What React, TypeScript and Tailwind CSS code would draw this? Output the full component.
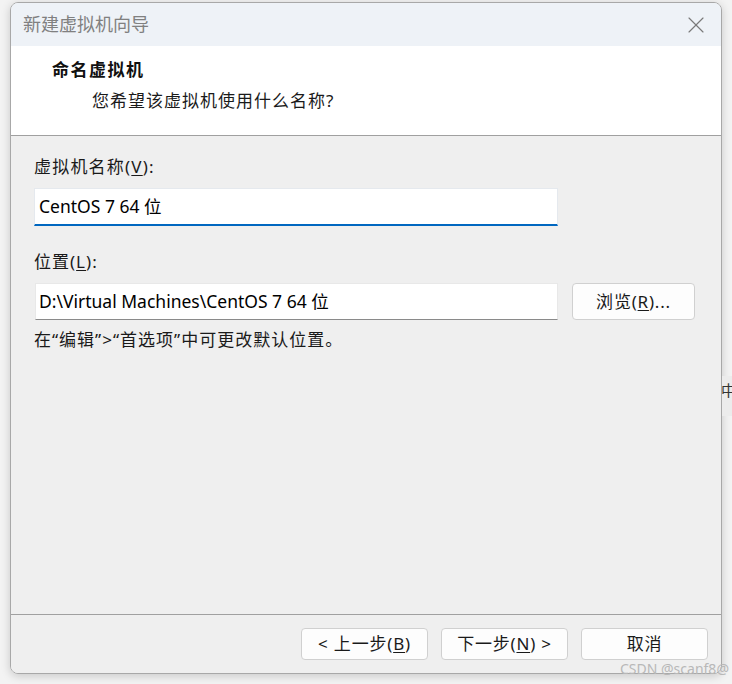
import { X } from "lucide-react"

const font = { fontFamily: '"Noto Sans", "Noto Sans CJK SC", sans-serif' }

function DialogButton({ children }: { children: React.ReactNode }) {
  return (
    <button className="h-[32px] w-[127px] rounded-[4px] border border-[#d0d0d0] bg-[#fdfdfd] text-[17px] tracking-[0.8px] text-[#1a1a1a]">
      {children}
    </button>
  )
}

export default function App() {
  return (
    <div
      className="relative h-[684px] w-[732px] overflow-hidden bg-[#f3f3f3]"
      style={font}
    >
      {/* neighbouring window fragment */}
      <div className="absolute left-[722px] top-[376px] h-[40px] w-[10px] bg-[#ececec]" />
      <span className="absolute left-[721px] top-[378px] text-[15px] leading-[24px] text-[#333]">
        中
      </span>

      <div className="ml-[10px] mt-[2px] flex h-[672px] w-[712px] flex-col overflow-hidden rounded-[8px] border-[1.5px] border-[#a8a8a8] shadow-[0_2px_10px_rgba(0,0,0,0.18)]">
        {/* Title bar */}
        <div className="flex h-[43px] shrink-0 items-center justify-between bg-[#eef2f7] pl-[12px] pr-[11px]">
          <span className="text-[18px] text-[#808080]">新建虚拟机向导</span>
          <X className="h-[28px] w-[28px] text-[#7a7a7a]" strokeWidth={1} />
        </div>

        {/* Header */}
        <div className="h-[90px] shrink-0 border-b border-[#a0a0a0] bg-white pl-[41px] pt-[12px]">
          <div className="text-[17px] font-bold leading-[24px] tracking-[1.5px] text-[#111]">命名虚拟机</div>
          <div className="ml-[40px] mt-[7px] text-[17px] leading-[24px] tracking-[1px] text-[#1a1a1a]">
            您希望该虚拟机使用什么名称?
          </div>
        </div>

        {/* Body */}
        <div className="flex-1 border-b border-[#a0a0a0] bg-[#efefef] pl-[23px] pt-[19px]">
          <div className="text-[17px] leading-[24px] tracking-[1.2px] text-[#1a1a1a]">
            虚拟机名称(<span className="underline underline-offset-2">V</span>):
          </div>
          <div className="mt-[9px] flex h-[38px] w-[524px] items-center border border-b-2 border-[#e5e9ee] border-b-[#0067c0] bg-white pl-[4px] text-[17.5px] text-black">
            CentOS 7 64 位
          </div>

          <div className="mt-[24px] text-[17px] leading-[24px] tracking-[1px] text-[#1a1a1a]">
            位置(<span className="underline underline-offset-2">L</span>):
          </div>
          <div className="mt-[9px] flex items-center gap-[14px]">
            <div className="ml-[1px] flex h-[37px] w-[523px] items-center border border-[#e8e8e8] border-b-[#8a8a8a] bg-white pl-[3px] text-[17.5px] text-black">
              D:\Virtual Machines\CentOS 7 64 位
            </div>
            <button className="h-[37px] w-[123px] rounded-[4px] border border-[#d0d0d0] bg-[#fdfdfd] text-[17px] tracking-[0.8px] text-[#1a1a1a]">
              浏览(<span className="underline underline-offset-2">R</span>)...
            </button>
          </div>

          <div className="mt-[8px] text-[17px] leading-[24px] tracking-[1px] text-[#1a1a1a]">
            在“编辑”&gt;“首选项”中可更改默认位置。
          </div>
        </div>

        {/* Footer */}
        <div className="flex h-[58px] shrink-0 justify-end gap-[13px] bg-[#efefef] pr-[13px] pt-[13px]">
          <DialogButton>
            &lt; 上一步(<span className="underline underline-offset-2">B</span>)
          </DialogButton>
          <DialogButton>
            下一步(<span className="underline underline-offset-2">N</span>) &gt;
          </DialogButton>
          <DialogButton>取消</DialogButton>
        </div>
      </div>

      {/* watermark */}
      <span className="absolute left-[620px] top-[659px] text-[14px] leading-[20px] text-[#b8b8b8]">
        CSDN @scanf8@
      </span>
    </div>
  )
}
